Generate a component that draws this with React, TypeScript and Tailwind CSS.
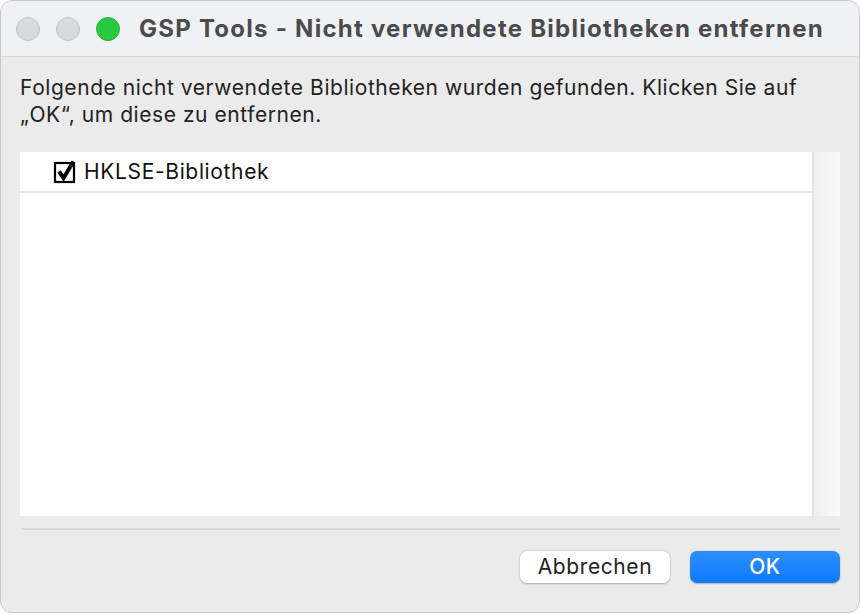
import React from "react";

export default function App() {
  const font = { fontFamily: "Inter, 'Noto Sans', 'Liberation Sans', sans-serif" };
  return (
    <div className="w-[860px] h-[614px] bg-white" style={font}>
      <div className="w-[860px] h-[613px] rounded-[12px] border border-[#c6c6c6] overflow-hidden bg-[#ebebeb] flex flex-col">
        <div className="h-[56px] shrink-0 bg-[#eff1f4] border-b border-[#d5d5d5] flex items-center pl-[15px]">
          <div className="flex gap-[16px]">
            <div className="w-[24px] h-[24px] rounded-full bg-[#d9dadd] border border-[#c3c4c7]" />
            <div className="w-[24px] h-[24px] rounded-full bg-[#d9dadd] border border-[#c3c4c7]" />
            <div className="w-[24px] h-[24px] rounded-full bg-[#28c840] border border-[#22b13a]" />
          </div>
          <div className="ml-[19px] text-[24px] font-bold text-[#4b4b4b] tracking-[1.25px]">
            GSP Tools - Nicht verwendete Bibliotheken entfernen
          </div>
        </div>
        <div className="flex flex-col px-[19px] pt-[17px]">
          <p className="text-[21px] leading-[27px] text-[#222222] tracking-[0.56px]">
            Folgende nicht verwendete Bibliotheken wurden gefunden. Klicken Sie auf
            <br />
            „OK“, um diese zu entfernen.
          </p>
          <div className="mt-[24px] h-[364px] flex">
            <div className="flex-1 bg-white">
              <div className="h-[41px] border-b-2 border-[#e8e8e8] flex items-center pl-[33px]">
                <svg width="26" height="26" viewBox="0 0 26 26" className="mt-[-2px]">
                  <rect x="2" y="5" width="19" height="19" fill="white" stroke="black" strokeWidth="2.2" />
                  <path d="M6 13.5 L10.5 20 L20.5 3.5" fill="none" stroke="black" strokeWidth="4" strokeLinecap="butt" strokeLinejoin="miter" />
                </svg>
                <span className="ml-[5px] text-[21px] text-[#111111] tracking-[0.65px]">HKLSE-Bibliothek</span>
              </div>
            </div>
            <div className="w-[2px] bg-[#e4e4e4]" />
            <div className="w-[26px] bg-gradient-to-r from-[#efefef] to-[#fafafa]" />
          </div>
          <div className="mt-[12px] h-[2px] bg-[#d7d7d7] ml-[1px]" />
          <div className="mt-[21px] flex justify-end gap-[20px]">
            <button className="w-[150px] h-[32px] rounded-[7px] bg-white shadow-[0_0.5px_2px_rgba(0,0,0,0.3)] text-[21px] text-[#222222] tracking-[0.6px]">
              Abbrechen
            </button>
            <button className="w-[150px] h-[32px] rounded-[7px] bg-gradient-to-b from-[#2d8ffd] to-[#0a7afe] shadow-[0_0.5px_1.5px_rgba(0,0,0,0.25)] text-[21px] text-white font-medium tracking-[0.5px]">
              OK
            </button>
          </div>
        </div>
      </div>
    </div>
  );
}
